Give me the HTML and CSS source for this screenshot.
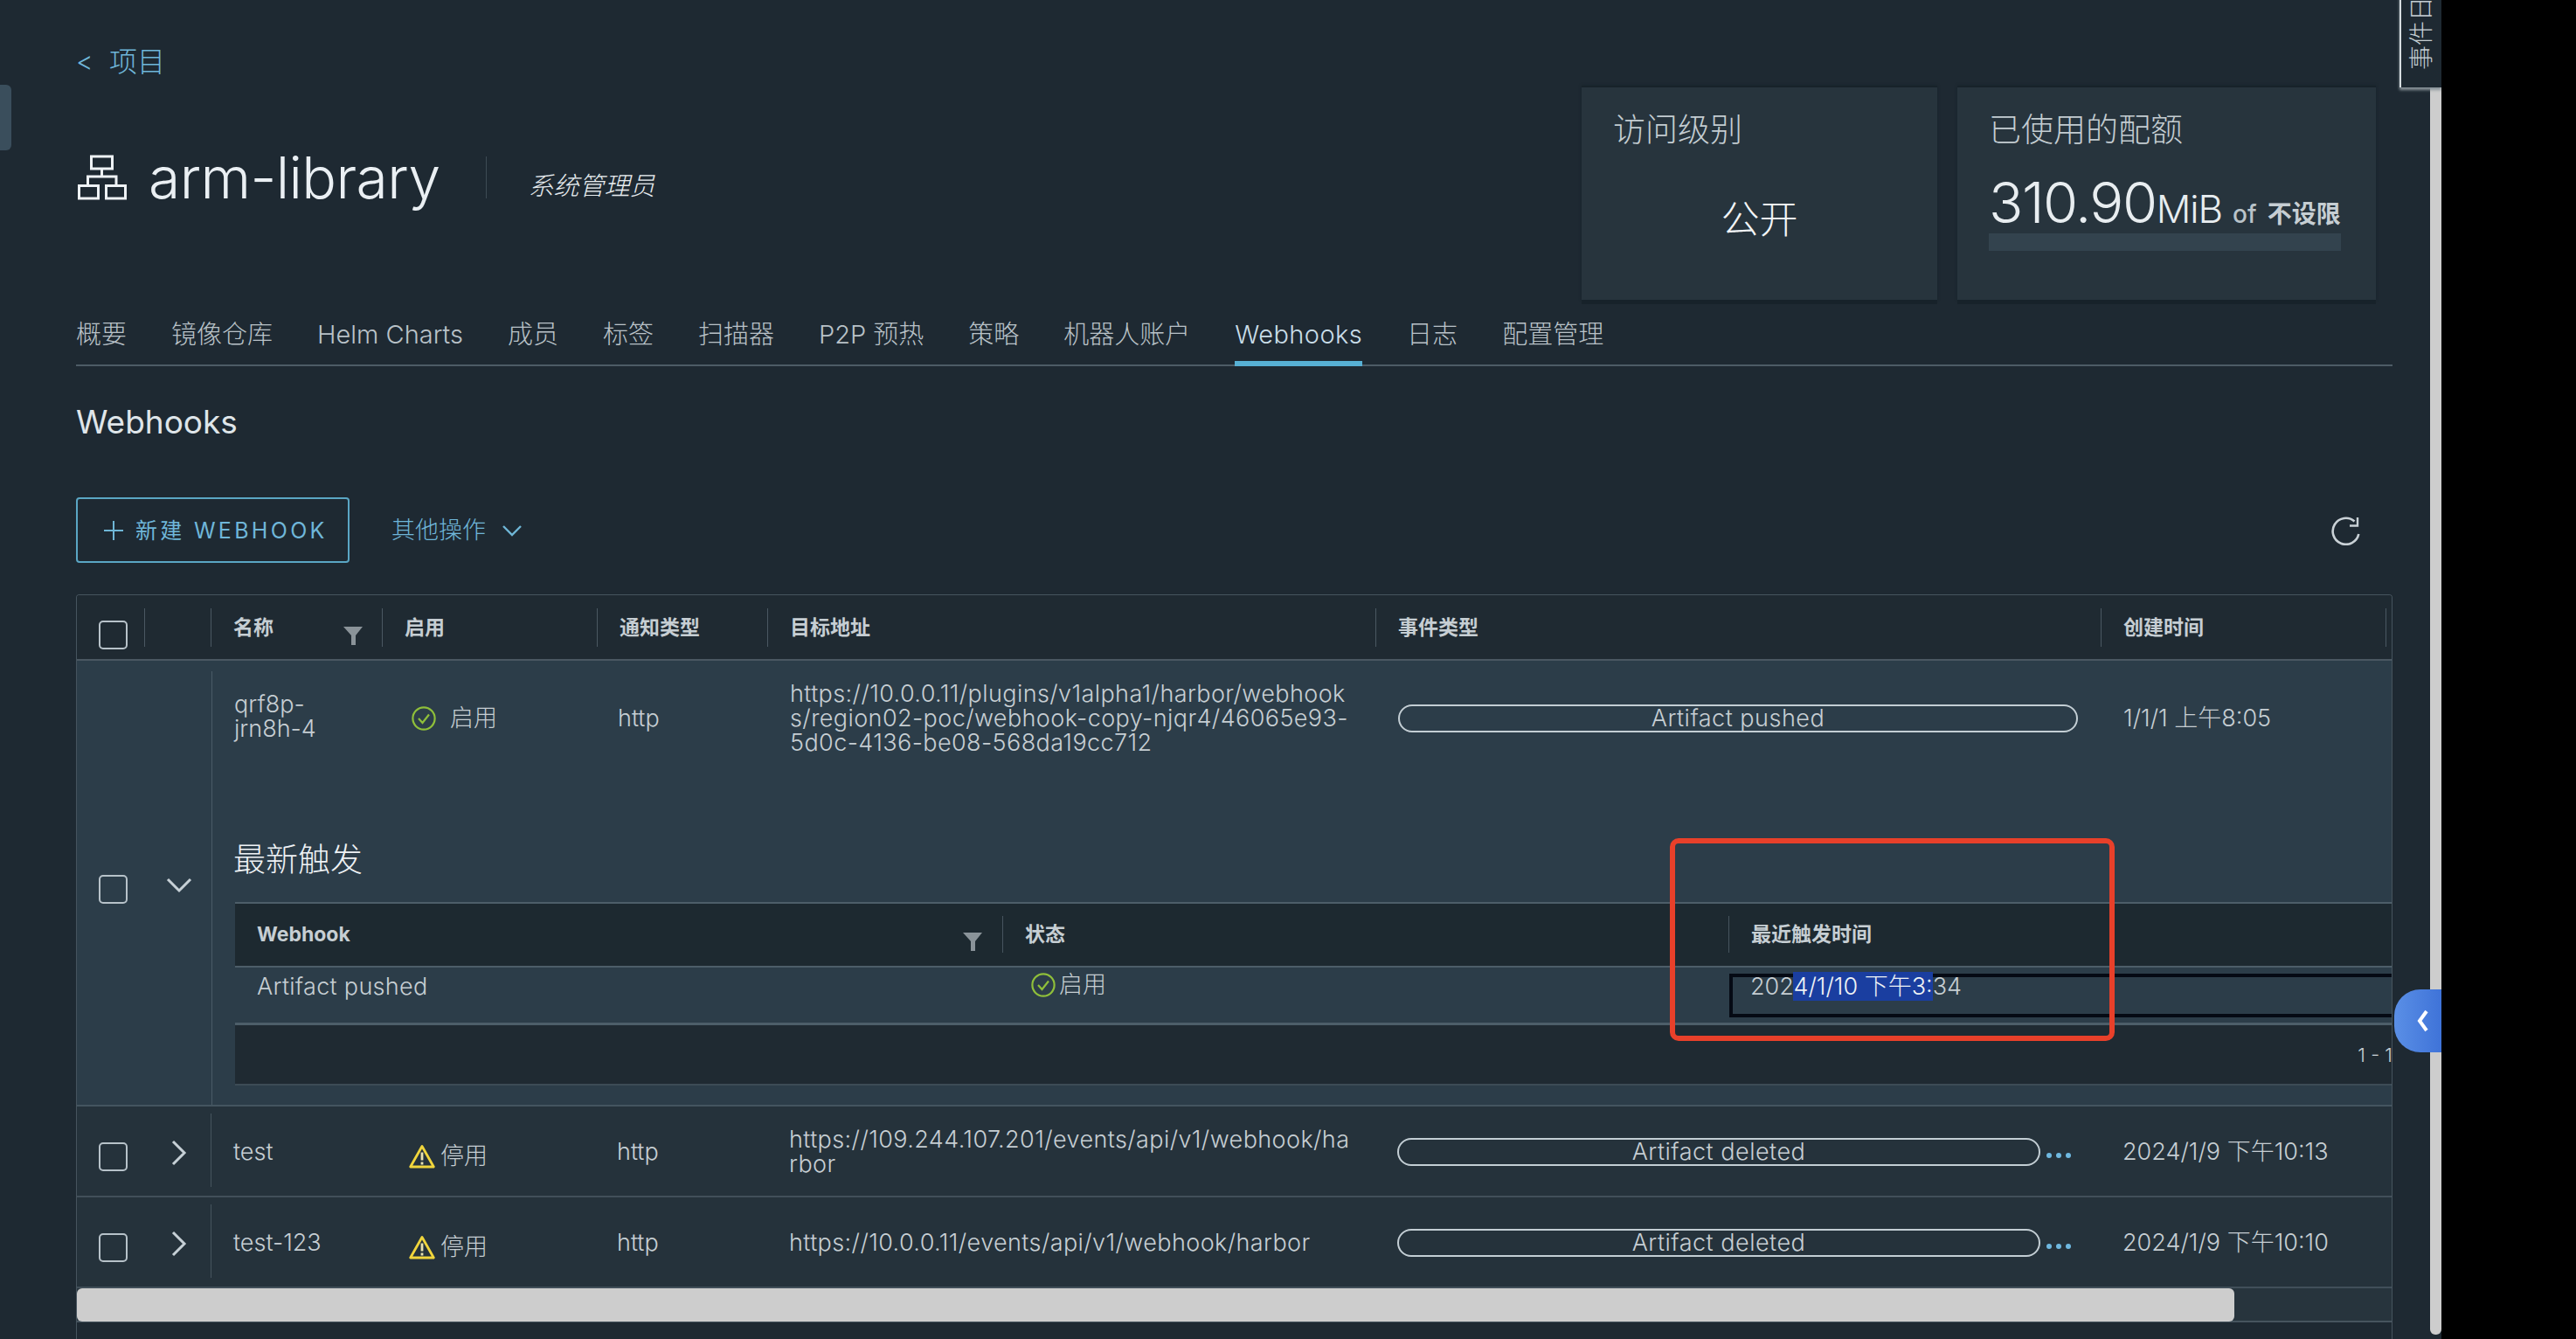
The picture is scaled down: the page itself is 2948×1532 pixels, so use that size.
FILE: index.html
```html
<!DOCTYPE html>
<html lang="zh-CN">
<head>
<meta charset="utf-8">
<title>arm-library - Webhooks</title>
<link rel="stylesheet" href="styles.css">
</head>
<body>
<div class="app">
  <main class="content">
    <section class="top">
      <div class="top-left">
        <a class="back"><span class="back-arrow">&lt;</span>项目</a>
        <div class="title-row">
          <svg class="project-icon" width="56" height="52" viewBox="0 0 56 52" fill="none" stroke="#eef2f5" stroke-width="3">
            <rect x="15.5" y="2" width="24" height="14"/>
            <path d="M27.5 16V25M11.5 35V25H44V35"/>
            <rect x="1.5" y="35.5" width="22" height="14.5"/>
            <rect x="32.5" y="35.5" width="22" height="14.5"/>
          </svg>
          <h1 class="title">arm-library</h1>
          <span class="role">系统管理员</span>
        </div>
      </div>
      <div class="cards">
        <div class="card card-access">
          <div class="card-title">访问级别</div>
          <div class="card-public">公开</div>
        </div>
        <div class="card card-quota">
          <div class="card-title">已使用的配额</div>
          <div class="quota"><span class="quota-num">310.90</span><span class="quota-unit">MiB</span><span class="quota-of">of</span><span class="quota-limit">不设限</span></div>
          <div class="quota-bar"></div>
        </div>
      </div>
    </section>

    <nav class="tabs">
      <a class="tab">概要</a><a class="tab">镜像仓库</a><a class="tab">Helm Charts</a><a class="tab">成员</a><a class="tab">标签</a><a class="tab">扫描器</a><a class="tab">P2P 预热</a><a class="tab">策略</a><a class="tab">机器人账户</a><a class="tab tab-active">Webhooks</a><a class="tab">日志</a><a class="tab">配置管理</a>
    </nav>

    <h2 class="section-title">Webhooks</h2>

    <div class="toolbar">
      <button class="btn-new">
        <svg width="24" height="24" viewBox="0 0 24 24" stroke="#6fb6d6" stroke-width="2"><path d="M12 1V23M1 12H23"/></svg>
        <span class="btn-label">新建 WEBHOOK</span>
      </button>
      <button class="btn-more"><span class="btn-label">其他操作</span>
        <svg width="24" height="14" viewBox="0 0 24 14" fill="none" stroke="#6fb6d6" stroke-width="2.4"><path d="M2 2L12 12L22 2"/></svg>
      </button>
      <svg class="refresh" width="34" height="34" viewBox="0 0 34 34" fill="none" stroke="#c9d1d6" stroke-width="2.6"><path d="M26.5 6.5A15 15 0 1 0 31.3 21"/><path d="M21 11.5H30V2" stroke-width="2.4"/></svg>
    </div>

    <section class="table">
      <div class="grid thead">
        <div class="th th-check"><span class="checkbox"></span></div>
        <div class="th"></div>
        <div class="th th-name">名称<svg class="filter" width="22" height="21" viewBox="0 0 22 21"><path d="M0 0H22L14 10V21H9V10Z" fill="#8a9399"/></svg></div>
        <div class="th">启用</div>
        <div class="th">通知类型</div>
        <div class="th">目标地址</div>
        <div class="th">事件类型</div>
        <div class="th">创建时间</div>
        <div class="th"></div>
      </div>

      <div class="row-expanded">
        <div class="exp-check"><span class="checkbox"></span></div>
        <div class="exp-toggle"><svg width="30" height="18" viewBox="0 0 30 18" fill="none" stroke="#c6d0d6" stroke-width="3"><path d="M2 2L15 15L28 2"/></svg></div>
        <div class="exp-main">
          <div class="grid-main summary">
            <div class="td td-first">qrf8p-<br>jrn8h-4</div>
            <div class="td td-status"><svg class="ok-icon" width="28" height="28" viewBox="0 0 28 28" fill="none" stroke="#8fbf3a" stroke-width="2.2"><circle cx="14" cy="14" r="12.6"/><path d="M8 14L12.5 19L20 9.5"/></svg>启用</div>
            <div class="td td-http">http</div>
            <div class="td td-url">https://10.0.0.11/plugins/v1alpha1/harbor/webhook<br>s/region02-poc/webhook-copy-njqr4/46065e93-<br>5d0c-4136-be08-568da19cc712</div>
            <div class="td"><span class="pill pill-full">Artifact pushed</span></div>
            <div class="td">1/1/1 上午8:05</div>
          </div>
          <h3 class="sub-title">最新触发</h3>
          <div class="nested">
            <div class="nested-head">
              <div class="nh nh-first">Webhook<svg class="filter" width="22" height="21" viewBox="0 0 22 21"><path d="M0 0H22L14 10V21H9V10Z" fill="#8a9399"/></svg></div>
              <div class="nh">状态</div>
              <div class="nh">最近触发时间</div>
            </div>
            <div class="nested-row">
              <div class="nd nd-first">Artifact pushed</div>
              <div class="nd nd-status"><svg width="28" height="28" viewBox="0 0 28 28" fill="none" stroke="#8fbf3a" stroke-width="2.2"><circle cx="14" cy="14" r="12.6"/><path d="M8 14L12.5 19L20 9.5"/></svg>启用</div>
              <div class="nd nd-time"><span class="time-text">202<mark class="sel">4/1/10 下午3:</mark>34</span></div>
            </div>
            <div class="nested-foot">1 - 1</div>
          </div>
        </div>
      </div>

      <div class="grid row">
        <div class="cell-check"><span class="checkbox"></span></div>
        <div class="cell-toggle"><svg width="18" height="30" viewBox="0 0 18 30" fill="none" stroke="#c6d0d6" stroke-width="3"><path d="M2 2L15 15L2 28"/></svg></div>
        <div class="td td-first">test</div>
        <div class="td td-warn"><svg width="30" height="28" viewBox="0 0 30 28" fill="none" stroke="#f0d53c" stroke-width="2.8"><path d="M15 2.5L28.3 26H1.7Z" stroke-linejoin="round"/><path d="M15 9.5V18.5M15 20.5V23.5" stroke="#e8e2b0"/></svg><span>停用</span></div>
        <div class="td td-http">http</div>
        <div class="td td-url">https://109.244.107.201/events/api/v1/webhook/ha<br>rbor</div>
        <div class="td"><span class="pill pill-short">Artifact deleted</span><span class="dots"><i></i><i></i><i></i></span></div>
        <div class="td">2024/1/9 下午10:13</div>
        <div class="td"></div>
      </div>

      <div class="grid row">
        <div class="cell-check"><span class="checkbox"></span></div>
        <div class="cell-toggle"><svg width="18" height="30" viewBox="0 0 18 30" fill="none" stroke="#c6d0d6" stroke-width="3"><path d="M2 2L15 15L2 28"/></svg></div>
        <div class="td td-first">test-123</div>
        <div class="td td-warn"><svg width="30" height="28" viewBox="0 0 30 28" fill="none" stroke="#f0d53c" stroke-width="2.8"><path d="M15 2.5L28.3 26H1.7Z" stroke-linejoin="round"/><path d="M15 9.5V18.5M15 20.5V23.5" stroke="#e8e2b0"/></svg><span>停用</span></div>
        <div class="td td-http">http</div>
        <div class="td td-url">https://10.0.0.11/events/api/v1/webhook/harbor</div>
        <div class="td"><span class="pill pill-short">Artifact deleted</span><span class="dots"><i></i><i></i><i></i></span></div>
        <div class="td">2024/1/9 下午10:10</div>
        <div class="td"></div>
      </div>

      <div class="hscroll"><div class="hscroll-thumb"></div></div>
    </section>
  </main>
  <div class="vscroll"></div>

  <div class="left-handle"></div>
  <div class="events-tab"><span>事件日志</span></div>
  <div class="red-box"></div>
  <div class="pull-tab"><svg width="14" height="26" viewBox="0 0 14 26" fill="none" stroke="#ffffff" stroke-width="4"><path d="M11 2L3 13L11 24"/></svg></div>
</div>
</body>
</html>
```

FILE: styles.css
```css
* { box-sizing: border-box; }
html, body { margin: 0; height: 100%; background: #000; overflow: hidden; }
body {
  font-family: Inter, "Noto Sans CJK SC", sans-serif;
  font-weight: 300;
  color: #c6ced3;
}
.app {
  position: relative;
  width: 2794px;
  height: 1532px;
  display: flex;
  background: #1e2932;
  overflow: hidden;
}
.content {
  width: 2781px;
  height: 1532px;
  padding: 0 43px 0 87px;
  display: flex;
  flex-direction: column;
}
.vscroll {
  width: 13px;
  height: 1527px;
  background: #cdcdcd;
  border-radius: 0 0 6px 6px;
}

/* top */
.top { height: 350px; display: flex; justify-content: space-between; flex: none; }
.top-left { padding-top: 50px; }
.back { display: block; height: 40px; line-height: 40px; font-size: 32px; color: #6fb6d9; }
.back-arrow { display: inline-block; width: 38px; font-size: 30px; vertical-align: 1px; }
.title-row { margin-top: 78px; height: 70px; display: flex; align-items: center; }
.project-icon { margin: 0 25px 0 2px; }
.title { margin: 0; font-size: 66px; font-weight: 300; line-height: 70px; color: #eaeff3; letter-spacing: -0.6px; }
.role {
  margin-left: 52px;
  padding-left: 48px;
  border-left: 1px solid #3d4a54;
  height: 48px;
  line-height: 68px;
  font-size: 29px;
  font-style: italic;
  color: #e6ebee;
}
.cards { display: flex; gap: 23px; margin: 98px 19px 0 0; height: 245px; }
.card {
  height: 245px;
  background: #27343d;
  border-top: 2px solid #17222a;
  box-shadow: 0 5px 0 #17222a, 0 0 3px #17222a;
  padding: 26px 36px;
}
.card-access { width: 407px; }
.card-quota { width: 479px; }
.card-title { font-size: 37px; line-height: 46px; color: #c3ccd1; }
.card-public { margin-top: 51px; text-align: center; font-size: 44px; line-height: 56px; color: #f2f5f7; }
.quota { margin-top: 25px; white-space: nowrap; height: 70px; line-height: 70px; color: #e8edf0; }
.quota-num { font-size: 65px; letter-spacing: -1.5px; }
.quota-unit { font-size: 44px; letter-spacing: -1px; }
.quota-of { font-size: 28px; font-weight: 500; margin-left: 12px; color: #b9c3c9; }
.quota-limit { font-size: 28px; font-weight: 700; margin-left: 12px; color: #c6ced3; }
.quota-bar { margin-top: 0; width: 403px; height: 20px; background: #33434e; }

/* tabs */
.tabs { flex: none; height: 69px; display: flex; gap: 51px; border-bottom: 2px solid #4d5c66; }
.tab { height: 69px; padding-top: 13px; line-height: 40px; font-size: 29px; color: #b9c2c8; white-space: nowrap; }
.tab-active { color: #c9dde8; border-bottom: 6px solid #57b0d4; letter-spacing: 0.4px; }

.section-title { flex: none; margin: 41px 0 0; font-size: 37px; font-weight: 400; line-height: 46px; color: #dfe5e9; }

/* toolbar */
.toolbar { flex: none; margin-top: 63px; height: 75px; display: flex; align-items: center; }
.btn-new {
  width: 313px;
  height: 75px;
  display: flex;
  align-items: center;
  gap: 13px;
  padding: 0 0 0 29px;
  background: none;
  border: 2px solid #5aa6c4;
  border-radius: 4px;
  color: #6fb6d9;
  font: 400 25px Inter, "Noto Sans CJK SC", sans-serif;
  letter-spacing: 3.3px;
  white-space: nowrap;
}
.btn-label { display: block; margin-top: -4px; }
.btn-more {
  margin-left: 48px;
  display: flex;
  align-items: center;
  gap: 18px;
  padding: 0;
  background: none;
  border: 0;
  color: #6fb6d9;
  font: 300 27px Inter, "Noto Sans CJK SC", sans-serif;
}
.refresh { margin-left: auto; margin-right: 36px; }

/* table */
.table {
  flex: none;
  margin-top: 36px;
  height: 852px;
  border: 1px solid #46545e;
  border-bottom: 0;
  border-radius: 4px 4px 0 0;
  overflow: hidden;
  font-size: 27px;
}
.grid {
  display: grid;
  grid-template-columns: 78px 76px 196px 246px 195px 696px 830px 326px 6px;
}
.thead { height: 75px; border-bottom: 2px solid #4a5862; background: #1f2a32; padding-top: 15px; }
.th {
  height: 44px;
  padding-left: 25px;
  font-size: 23px;
  font-weight: 700;
  line-height: 44px;
  color: #c6ced3;
  border-right: 1px solid #4a5862;
  position: relative;
}
.th:last-child { border-right: 0; }
.th-check { padding: 14px 0 0 25px; }
.th-name .filter { position: absolute; left: 151px; top: 21px; }
.checkbox {
  display: block;
  width: 33px;
  height: 33px;
  border: 2px solid #b7c2c9;
  border-radius: 5px;
}

.row-expanded {
  height: 510px;
  display: flex;
  background: #2c3d49;
  border-bottom: 2px solid #445560;
}
.exp-check { width: 78px; padding: 245px 0 0 25px; }
.exp-toggle { width: 76px; padding-top: 240px; padding-left: 24px; }
.exp-main { flex: 1; min-width: 0; border-left: 1px solid #4a5b66; margin-top: 12px; }
.grid-main {
  display: grid;
  grid-template-columns: 196px 246px 195px 696px 830px 326px;
  height: 108px;
}
.td { display: flex; align-items: center; padding-left: 24px; line-height: 28px; color: #c6ced3; white-space: nowrap; }
.summary .td:first-child { display: block; padding-top: 24px; }
.td-first { padding-left: 25px; }
.td-http { padding-left: 22px; }
.td-status { padding-left: 32px; gap: 16px; }
.td-url { display: block; align-self: center; padding-left: 24px; letter-spacing: 0.4px; }
.pill {
  display: block;
  height: 32px;
  border: 2px solid #c3ced4;
  border-radius: 16px;
  text-align: center;
  line-height: 27px;
  font-size: 27px;
  letter-spacing: 0.5px;
}
.pill-full { width: 778px; }
.pill-short { width: 736px; }
.dots { display: flex; gap: 5px; margin: 8px 0 0 7px; }
.dots i { display: block; width: 6px; height: 6px; border-radius: 50%; background: #6fb8e0; }
.sub-title { margin: 83px 0 0; padding-left: 24px; font-size: 37px; font-weight: 300; line-height: 50px; color: #eef2f5; }
.nested { margin: 23px 0 0 26px; width: 2469px; border-top: 2px solid #4d5e69; }
.nested-head {
  height: 73px;
  display: grid;
  grid-template-columns: 878px 831px 760px;
  background: #1d2930;
  padding-top: 14px;
  border-bottom: 2px solid #4d5e69;
}
.nh { height: 42px; line-height: 42px; padding-left: 25px; font-size: 23px; font-weight: 700; color: #c6ced3; border-left: 1px solid #46545e; position: relative; }
.nh-first { border-left: 0; }
.nh .filter { position: absolute; left: 833px; top: 19px; }
.nested-row {
  height: 66px;
  display: grid;
  grid-template-columns: 878px 831px 760px;
  background: #2c3d49;
  border-bottom: 3px solid #4d5e69;
}
.nd { line-height: 28px; color: #c6ced3; }
.nd-first { padding: 8px 0 0 25px; letter-spacing: 0.3px; }
.nd-status { display: flex; padding: 6px 0 0 33px; gap: 4px; align-items: flex-start; }
.nd-time { margin: 7px 0 6px 1px; border: 4px solid #050a14; border-right: 0; padding-left: 20px; color: #c6ced3; }
.time-text { display: block; margin-top: -7px; line-height: 36px; white-space: nowrap; }
.sel { background: #1a3ea0; color: #eef2f5; }
.nested-foot { height: 69px; line-height: 68px; background: #1f2a32; border-bottom: 2px solid #3d4c56; text-align: right; font-size: 22px; }

.row { height: 104px; padding-top: 2px; background: #25323b; border-bottom: 2px solid #414f59; }
.cell-check { padding: 39px 0 0 25px; }
.cell-toggle { padding: 30px 0 0 30px; border-right: 1px solid #46545e; margin: 6px 0 10px; }
.td-warn { padding: 10px 0 0 30px; gap: 6px; }

.hscroll { height: 39px; background: #27343d; border-bottom: 2px solid #46545e; }
.hscroll-thumb { width: 2469px; height: 38px; background: #cdcdcd; border-radius: 6px; }

/* overlays */
.left-handle { position: absolute; left: 0; top: 97px; width: 13px; height: 75px; background: #3a4e5c; border-radius: 0 6px 6px 0; }
.events-tab {
  position: absolute;
  left: 2746px;
  top: -10px;
  width: 48px;
  height: 110px;
  background: #1e2932;
  border-left: 2px solid #d6dce0;
  box-shadow: 0 3px 3px #8a949a;
  overflow: hidden;
}
.events-tab span {
  display: block;
  position: absolute;
  left: 0;
  bottom: 20px;
  width: 46px;
  writing-mode: vertical-rl;
  text-orientation: sideways;
  transform: rotate(180deg);
  font-size: 28px;
  line-height: 46px;
  color: #c3ccd1;
  white-space: nowrap;
}
.red-box {
  position: absolute;
  left: 1911px;
  top: 959px;
  width: 509px;
  height: 232px;
  border: 6px solid #e8402a;
  border-radius: 10px;
}
.pull-tab {
  position: absolute;
  left: 2740px;
  top: 1132px;
  width: 54px;
  height: 72px;
  background: linear-gradient(90deg, #5a8fe6, #3f73d8);
  border-radius: 30px 0 0 30px;
  display: flex;
  align-items: center;
  justify-content: center;
  padding-left: 12px;
}
```
